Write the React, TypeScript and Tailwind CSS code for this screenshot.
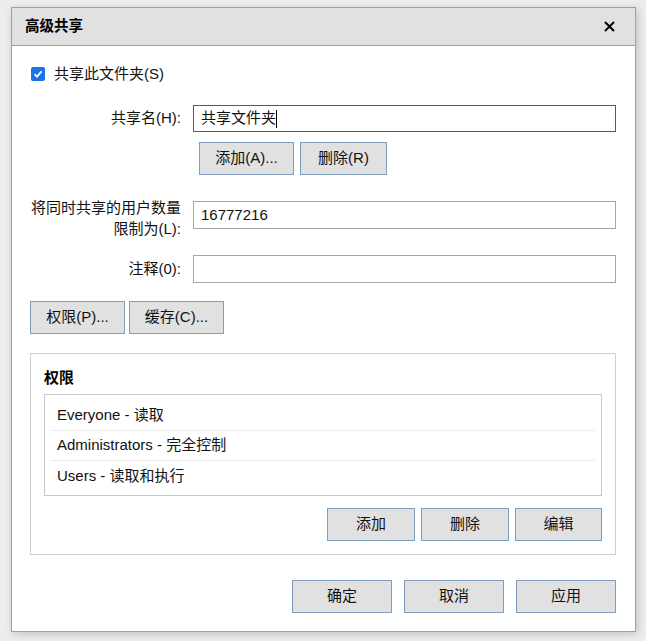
import type { ReactNode } from 'react'

const font = 'font-["Liberation_Sans","Noto_Sans_CJK_SC",sans-serif]'

interface PermRow {
  who: string
  right: string
}

const perms: PermRow[] = [
  { who: 'Everyone', right: '读取' },
  { who: 'Administrators', right: '完全控制' },
  { who: 'Users', right: '读取和执行' },
]

function Btn({ children, className = '' }: { children: ReactNode; className?: string }) {
  return (
    <button
      className={`h-[33px] border border-[#7f9dbd] bg-[#e1e1e1] text-[15px] text-[#111] flex items-center justify-center ${className}`}
    >
      {children}
    </button>
  )
}

export default function App() {
  return (
    <div className={`w-[646px] h-[641px] bg-[#ededed] pt-[7px] pl-[11px] ${font}`}>
      <div className="w-[625px] h-[625px] border border-[#a0a0a0] bg-white flex flex-col shadow-[2px_2px_8px_rgba(0,0,0,0.18)]">
        {/* Title bar */}
        <div className="h-[38px] shrink-0 bg-[#e1e1e1] border-b border-[#a0a0a0] flex items-center justify-between pl-[13px] pr-[20px]">
          <span className="text-[14.5px] font-bold text-black">高级共享</span>
          <svg width="11" height="11" viewBox="0 0 11 11">
            <path d="M1 1L10 10M10 1L1 10" stroke="#000" strokeWidth="2" />
          </svg>
        </div>

        <div className="flex flex-col pl-[18px] pr-[19px] text-[15px] text-[#111]">
          {/* Share checkbox */}
          <div className="mt-[18px] h-[20px] flex items-center gap-[9px] pl-[1px]">
            <span className="w-[14px] h-[14px] rounded-[2px] bg-[#1a73e8] flex items-center justify-center">
              <svg width="10" height="10" viewBox="0 0 10 10">
                <path d="M1.5 5.2L4 7.6L8.6 2.4" stroke="#fff" strokeWidth="1.8" fill="none" />
              </svg>
            </span>
            <span>共享此文件夹(S)</span>
          </div>

          {/* Share name */}
          <div className="mt-[21px] flex items-center gap-[12px]">
            <span className="w-[151px] text-right">共享名(H):</span>
            <div className="flex-1 h-[27px] border border-[#2f5fa8] flex items-center px-[7px]">
              <span>共享文件夹</span>
              <span className="w-px h-[18px] bg-black"></span>
            </div>
          </div>

          <div className="mt-[10px] flex gap-[6px] pl-[169px]">
            <Btn className="w-[95px]">添加(A)...</Btn>
            <Btn className="w-[87px]">删除(R)</Btn>
          </div>

          {/* User limit */}
          <div className="mt-[22px] flex items-start gap-[12px]">
            <span className="w-[151px] text-right leading-[21px]">
              将同时共享的用户数量
              <br />
              限制为(L):
            </span>
            <div className="flex-1 mt-[4px] h-[28px] border border-[#a6a6a6] flex items-center px-[7px]">
              16777216
            </div>
          </div>

          {/* Comment */}
          <div className="mt-[16px] flex items-center gap-[12px]">
            <span className="w-[151px] text-right">注释(0):</span>
            <div className="flex-1 h-[28px] border border-[#a6a6a6]"></div>
          </div>

          <div className="mt-[18px] flex gap-[4px]">
            <Btn className="w-[95px]">权限(P)...</Btn>
            <Btn className="w-[95px]">缓存(C)...</Btn>
          </div>

          {/* Permissions group */}
          <div className="mt-[19px] h-[202px] border border-[#cfcfcf] flex flex-col px-[13px]">
            <span className="mt-[14px] font-bold leading-[20px] text-black">权限</span>
            <div className="mt-[6px] h-[102px] border border-[#c8c8c8] flex flex-col pt-[6px] px-[6px]">
              {perms.map((p, i) => (
                <div
                  key={p.who}
                  className={`h-[30px] flex items-center pl-[6px] ${i < perms.length - 1 ? 'border-b border-[#ebebeb]' : ''}`}
                >
                  {p.who} - {p.right}
                </div>
              ))}
            </div>
            <div className="mt-[12px] flex justify-end gap-[6px]">
              <Btn className="w-[88px]">添加</Btn>
              <Btn className="w-[88px]">删除</Btn>
              <Btn className="w-[87px]">编辑</Btn>
            </div>
          </div>

          {/* Footer */}
          <div className="mt-[25px] flex justify-end gap-[12px]">
            <Btn className="w-[100px]">确定</Btn>
            <Btn className="w-[100px]">取消</Btn>
            <Btn className="w-[100px]">应用</Btn>
          </div>
        </div>
      </div>
    </div>
  )
}
